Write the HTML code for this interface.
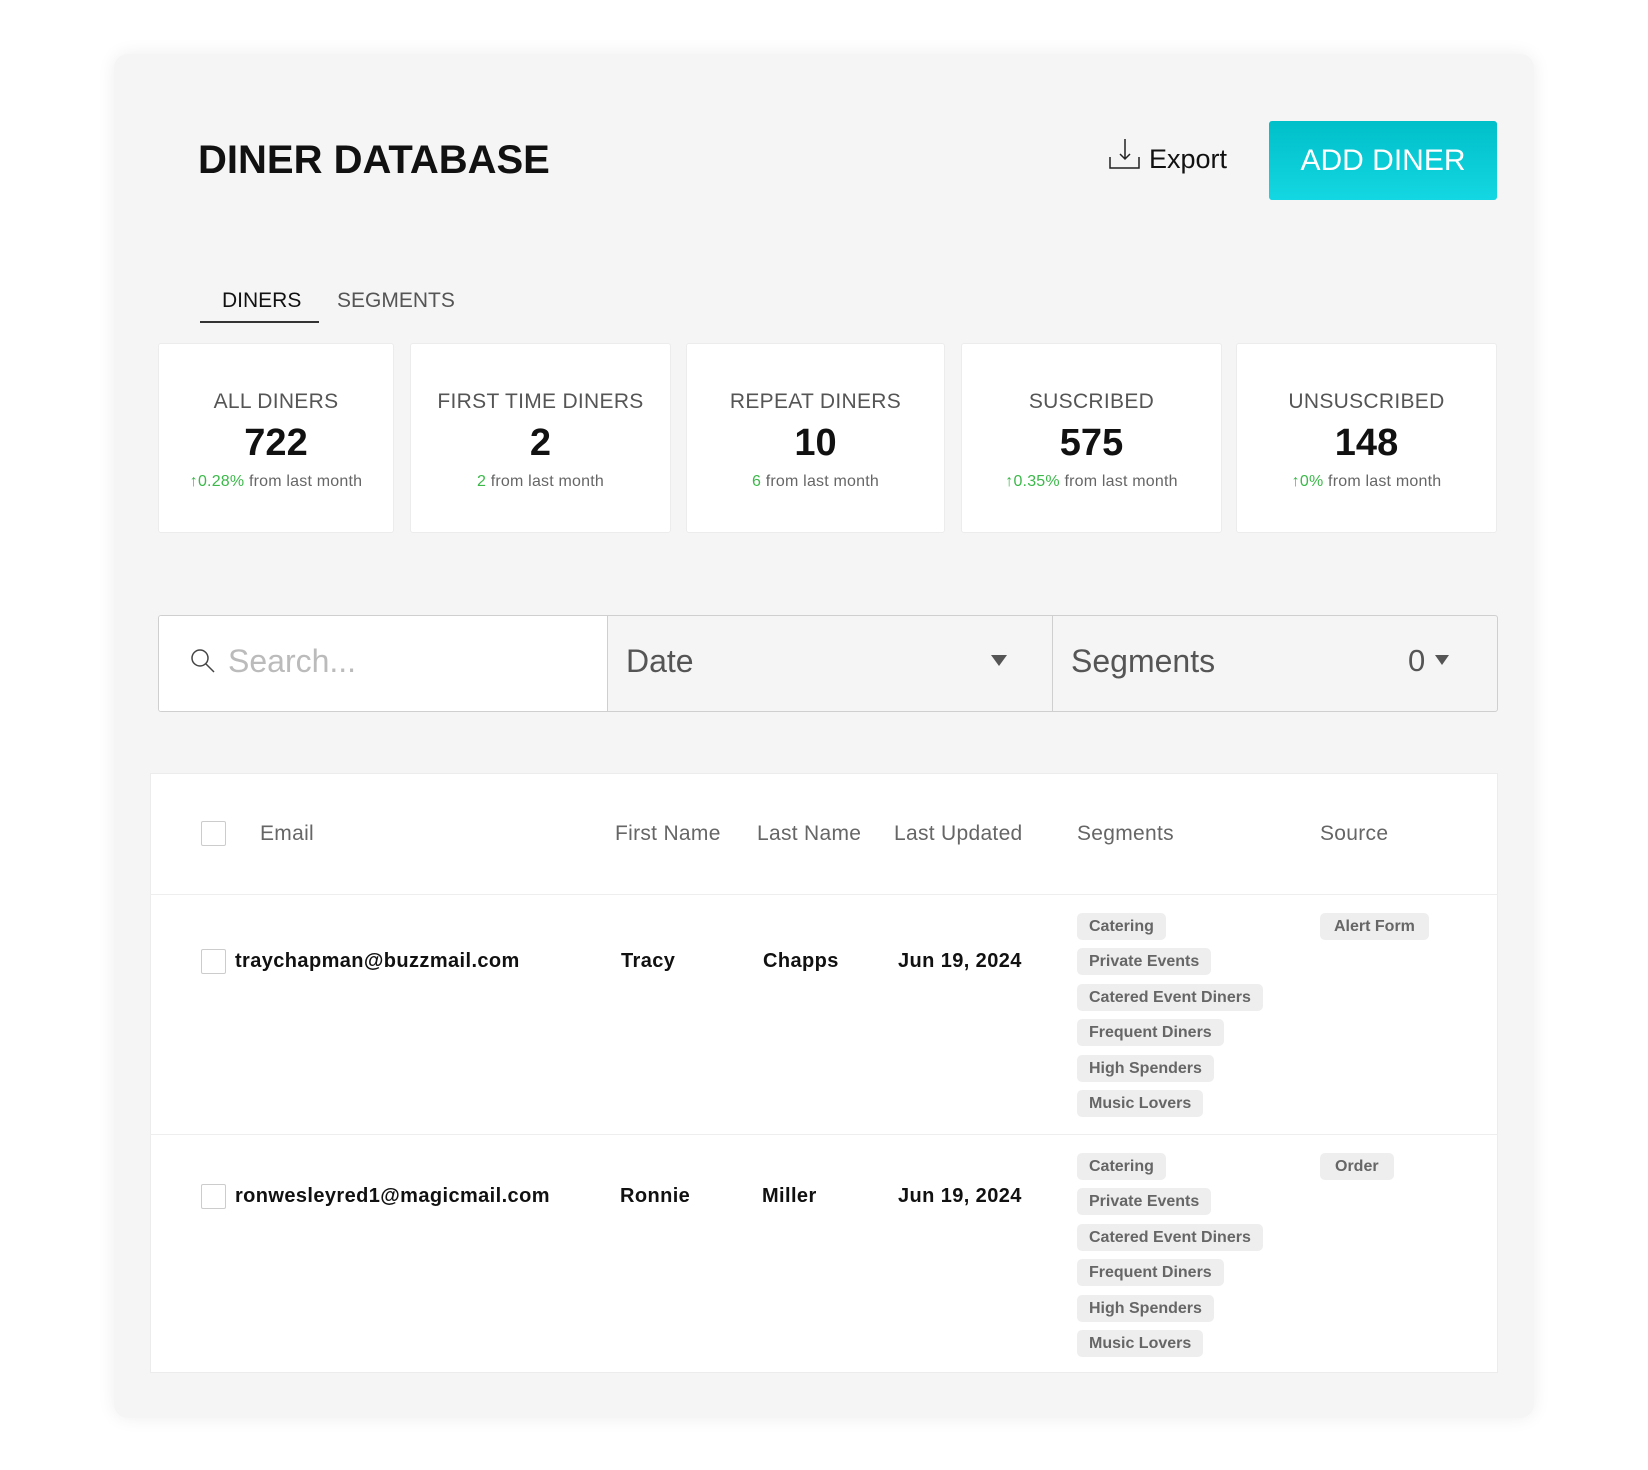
<!DOCTYPE html>
<html><head><style>
*{box-sizing:border-box;margin:0;padding:0}
body{width:1648px;height:1470px;background:#fff;font-family:"Liberation Sans",sans-serif;position:relative;overflow:hidden}
.a{position:absolute}
#card{left:114px;top:54px;width:1420px;height:1364px;background:#f5f5f5;border-radius:14px;box-shadow:0 0 18px rgba(0,0,0,.07)}
.stat{top:343px;height:190px;background:#fff;border:1px solid #ececec;border-radius:3px;text-align:center}
.stat .l{margin-top:46px;font-size:21px;color:#555;letter-spacing:.3px}
.stat .n{margin-top:8px;font-size:38px;font-weight:bold;color:#111}
.stat .s{margin-top:8px;font-size:16px;color:#666;letter-spacing:.2px}
.g{color:#3cb84a}
.th{top:822px;font-size:21px;color:#666;letter-spacing:.3px}
.td{font-size:20px;font-weight:bold;color:#111;letter-spacing:.4px}
.cb{width:25px;height:25px;border:1px solid #ccc;border-radius:2px;background:#fff}
.tag{height:27px;line-height:27px;padding:0 12px;background:#eee;border-radius:5px;font-size:16px;font-weight:bold;color:#666;white-space:nowrap}
</style></head><body>
<div id="card" class="a"></div>
<div class="a" style="left:198px;top:138px;font-size:40px;font-weight:bold;color:#111;letter-spacing:0">DINER DATABASE</div>
<svg class="a" style="left:1109px;top:138px" width="32" height="34" viewBox="0 0 32 34"><path d="M1 19v11h29V19M16 1v20M11 16l5 5 5-5" fill="none" stroke="#222" stroke-width="1.5"/></svg>
<div class="a" style="left:1149px;top:144px;font-size:27px;color:#111">Export</div>
<div class="a" style="left:1269px;top:121px;width:228px;height:79px;background:linear-gradient(#00bfc9,#13d7e2);border-radius:3px;color:#fff;font-size:30px;text-align:center;line-height:79px">ADD DINER</div>
<div class="a" style="left:222px;top:289px;font-size:21px;color:#111">DINERS</div>
<div class="a" style="left:200px;top:321px;width:119px;height:2px;background:#333"></div>
<div class="a" style="left:337px;top:289px;font-size:21px;color:#555">SEGMENTS</div>

<div class="a stat" style="left:158px;width:236px"><div class="l">ALL DINERS</div><div class="n">722</div><div class="s"><span class="g">↑0.28%</span> from last month</div></div>
<div class="a stat" style="left:410px;width:261px"><div class="l">FIRST TIME DINERS</div><div class="n">2</div><div class="s"><span class="g">2</span> from last month</div></div>
<div class="a stat" style="left:686px;width:259px"><div class="l">REPEAT DINERS</div><div class="n">10</div><div class="s"><span class="g">6</span> from last month</div></div>
<div class="a stat" style="left:961px;width:261px"><div class="l">SUSCRIBED</div><div class="n">575</div><div class="s"><span class="g">↑0.35%</span> from last month</div></div>
<div class="a stat" style="left:1236px;width:261px"><div class="l">UNSUSCRIBED</div><div class="n">148</div><div class="s"><span class="g">↑0%</span> from last month</div></div>

<div class="a" style="left:158px;top:615px;width:1340px;height:97px;border:1px solid #cfcfcf;border-radius:3px;background:#f5f5f5;overflow:hidden">
 <div class="a" style="left:0;top:0;width:449px;height:97px;background:#fff;border-right:1px solid #cfcfcf"></div>
 <div class="a" style="left:893px;top:0;width:1px;height:97px;background:#cfcfcf"></div>
</div>
<svg class="a" style="left:190px;top:648px" width="26" height="26" viewBox="0 0 26 26"><circle cx="10" cy="10" r="8" fill="none" stroke="#444" stroke-width="1.5"/><path d="M16 16l8 8" stroke="#444" stroke-width="1.5"/></svg>
<div class="a" style="left:228px;top:643px;font-size:32px;color:#bbb">Search...</div>
<div class="a" style="left:626px;top:643px;font-size:32px;color:#555">Date</div>
<div class="a" style="left:991px;top:655px;width:0;height:0;border-left:8px solid transparent;border-right:8px solid transparent;border-top:11px solid #555"></div>
<div class="a" style="left:1071px;top:643px;font-size:32px;color:#555">Segments</div>
<div class="a" style="left:1408px;top:643px;font-size:31px;color:#555">0</div>
<div class="a" style="left:1435px;top:655px;width:0;height:0;border-left:7px solid transparent;border-right:7px solid transparent;border-top:10px solid #555"></div>

<div class="a" style="left:150px;top:773px;width:1348px;height:600px;background:#fff;border:1px solid #ececec"></div>
<div class="a" style="left:150px;top:894px;width:1348px;height:1px;background:#eee"></div>
<div class="a" style="left:150px;top:1134px;width:1348px;height:1px;background:#eee"></div>
<div class="a cb" style="left:201px;top:821px"></div>
<div class="a th" style="left:260px">Email</div>
<div class="a th" style="left:615px">First Name</div>
<div class="a th" style="left:757px">Last Name</div>
<div class="a th" style="left:894px">Last Updated</div>
<div class="a th" style="left:1077px">Segments</div>
<div class="a th" style="left:1320px">Source</div>

<div class="a cb" style="left:201px;top:949px"></div>
<div class="a td" style="left:235px;top:950px">traychapman@buzzmail.com</div>
<div class="a td" style="left:621px;top:950px">Tracy</div>
<div class="a td" style="left:763px;top:950px">Chapps</div>
<div class="a td" style="left:898px;top:950px">Jun 19, 2024</div>
<div class="a tag" style="left:1077px;top:913px">Catering</div>
<div class="a tag" style="left:1077px;top:948px">Private Events</div>
<div class="a tag" style="left:1077px;top:984px">Catered Event Diners</div>
<div class="a tag" style="left:1077px;top:1019px">Frequent Diners</div>
<div class="a tag" style="left:1077px;top:1055px">High Spenders</div>
<div class="a tag" style="left:1077px;top:1090px">Music Lovers</div>
<div class="a tag" style="left:1320px;top:913px;padding:0 14px">Alert Form</div>

<div class="a cb" style="left:201px;top:1184px"></div>
<div class="a td" style="left:235px;top:1185px">ronwesleyred1@magicmail.com</div>
<div class="a td" style="left:620px;top:1185px">Ronnie</div>
<div class="a td" style="left:762px;top:1185px">Miller</div>
<div class="a td" style="left:898px;top:1185px">Jun 19, 2024</div>
<div class="a tag" style="left:1077px;top:1153px">Catering</div>
<div class="a tag" style="left:1077px;top:1188px">Private Events</div>
<div class="a tag" style="left:1077px;top:1224px">Catered Event Diners</div>
<div class="a tag" style="left:1077px;top:1259px">Frequent Diners</div>
<div class="a tag" style="left:1077px;top:1295px">High Spenders</div>
<div class="a tag" style="left:1077px;top:1330px">Music Lovers</div>
<div class="a tag" style="left:1320px;top:1153px;padding:0 15px">Order</div>
</body></html>
